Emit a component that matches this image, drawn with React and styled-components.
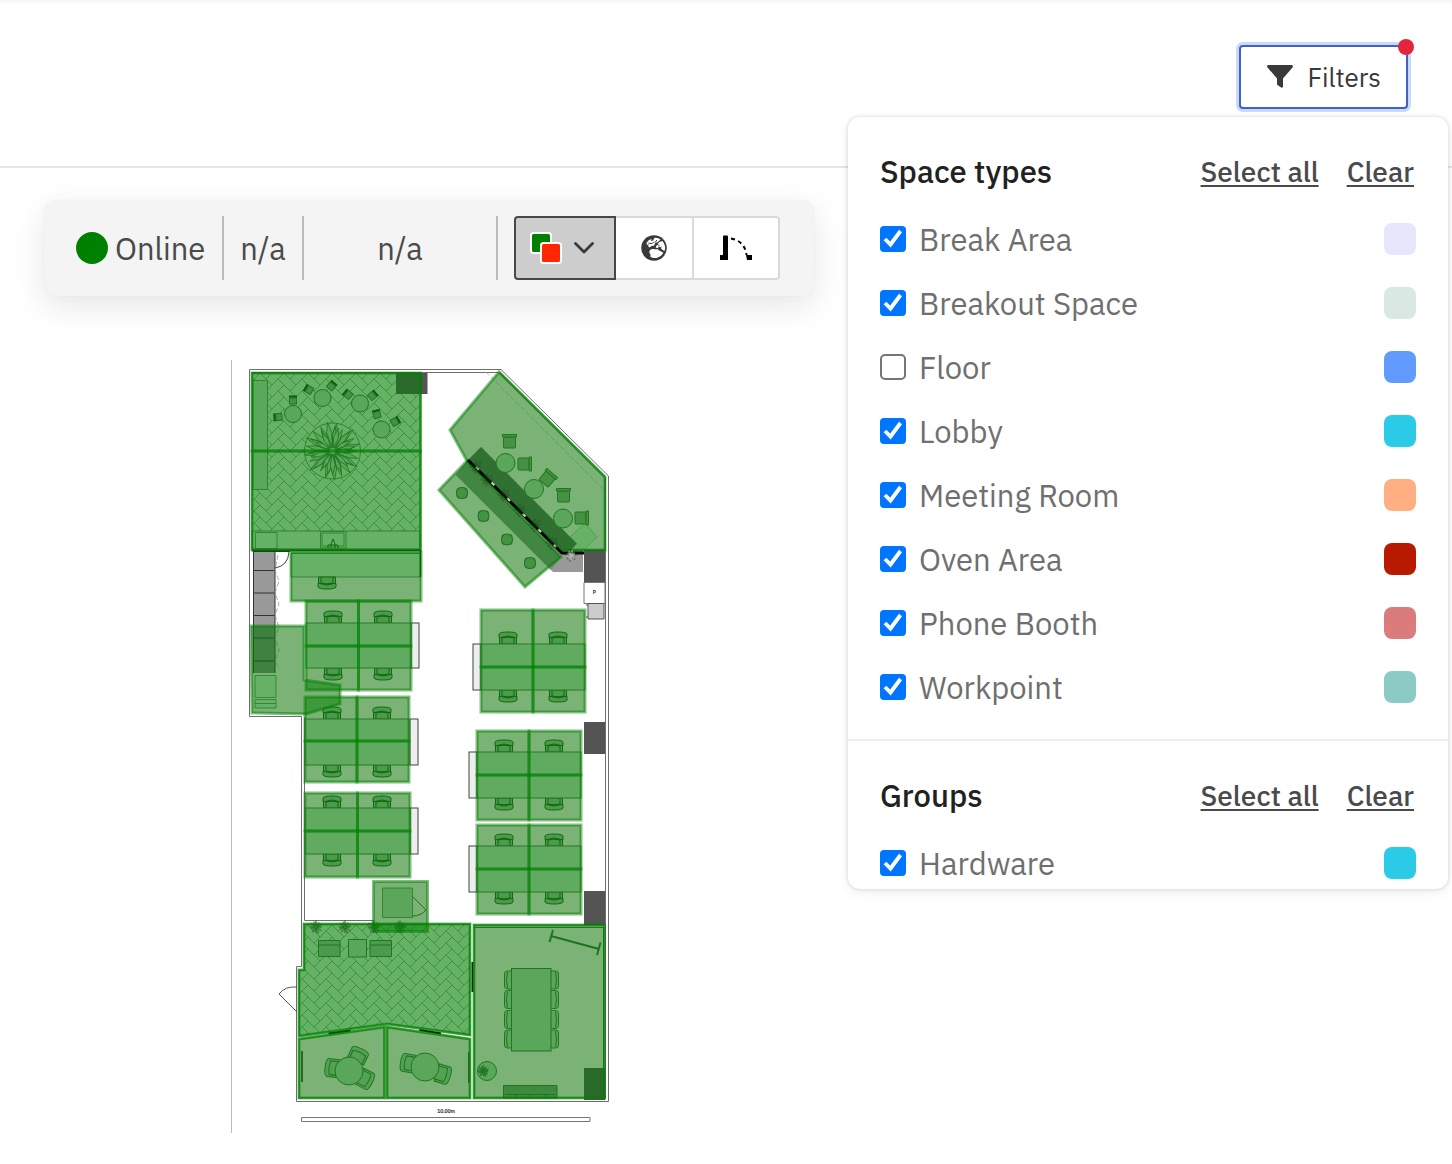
import React, { useState } from 'react';
import styled, { createGlobalStyle } from 'styled-components';

const GlobalStyle = createGlobalStyle`
  * { box-sizing: border-box; }

  body {
    margin: 0;
    background: #fff;
    color: #4a4a4a;
    font-family: "IBM Plex Sans", Roboto, "Liberation Sans", sans-serif;
  }

  button, input { font: inherit; }
`;

const spaceTypes = [
  { name: 'Break Area', color: '#e6e6fa', checked: true },
  { name: 'Breakout Space', color: '#d9e8e3', checked: true },
  { name: 'Floor', color: '#619bff', checked: false },
  { name: 'Lobby', color: '#2bcbe8', checked: true },
  { name: 'Meeting Room', color: '#ffaf82', checked: true },
  { name: 'Oven Area', color: '#b81a00', checked: true },
  { name: 'Phone Booth', color: '#db7b7b', checked: true },
  { name: 'Workpoint', color: '#8ccac6', checked: true },
];

const groups = [
  { name: 'Hardware', color: '#2bcbe8', checked: true },
];

/* ---------- icons ---------- */

const FunnelIcon = () => (
  <svg width="26" height="24" viewBox="0 0 26 24" aria-hidden="true">
    <path d="M1.5 0h23c1.3 0 1.9 1.4 1 2.4L16 13.6v8c0 1-1 1.500-1.800 1l-3.400-2.400c-.5-.3-.8-.8-.8-1.300v-5.300L.5 2.400C-.4 1.400.2 0 1.500 0z" fill="#393939" />
  </svg>
);

const LayersIcon = () => (
  <svg width="32" height="32" viewBox="0 0 32 32" aria-hidden="true">
    <rect x="1" y="1" width="20" height="20" rx="2.500" fill="green" stroke="#fff" strokeWidth="2" />
    <rect x="11" y="11" width="20" height="20" rx="2.500" fill="#ff2600" stroke="#fff" strokeWidth="2" />
  </svg>
);

const ChevronIcon = () => (
  <svg width="20" height="12" viewBox="0 0 20 12" aria-hidden="true">
    <path d="M1.500 1.500 10 10l8.500-8.500" fill="none" stroke="#393939" strokeWidth="2.800" strokeLinecap="round" strokeLinejoin="round" />
  </svg>
);

const EarthIcon = () => (
  <svg width="26" height="26" viewBox="0 0 26 26" aria-hidden="true">
    <circle cx="13" cy="13" r="12.800" fill="#393939" />
    <path d="M9 15.200c1.500-1.400 3.500-1.200 4.800-.9 1 .4 2.200-.4 3.200.2 1.700 1.400 3.600 2.600 5.400 3-1.400 2.800-3.800 4.800-6.900 5.400-2.300.3-4.800-.4-6.300-1.500.6-1 .5-1.800-.2-2.600-.8-1.100-1-2.600 0-3.600z" fill="#fff" />
    <path d="M5.600 7.700 8 5.100l2.700-1-1 2 2.500-.5 1.200-2.900 3.300.2 2.900 1.600-2.700 2.600-2.800 1-.9 2.300-3.200.8-1.200 1.300-1.900-1.200 1.200-2-2.200.7z" fill="#fff" />
    <path d="m16.100 9.500 2.200-2.600 3.100-.8c1.700 1.900 2.700 4.300 2.800 6.800l-.7 3-1.900-1-1.900-1.800 1.700-1.700-2.300.8-1.300-.6-1 1.700-2.200-.9z" fill="#fff" />
    <path d="m7.500 8 3.500.7 2-2M13 12l3-2.800 2.500 1.600M16 5l-2 2.500" fill="none" stroke="#393939" strokeWidth="1" />
  </svg>
);

const DoorSwingIcon = () => (
  <svg width="32" height="26" viewBox="0 0 32 26" aria-hidden="true">
    <path d="M3 1.500Q3 .5 4 .5h3q1 0 1 1V25H0v-5h3z" fill="#000" />
    <path d="M26 20h6v5h-5z" fill="#000" />
    <path d="M11 3.500C20 5 25.500 11 26.500 20" fill="none" stroke="#000" strokeWidth="2" strokeDasharray="4 3.500" />
  </svg>
);

/* ---------- floor plan ---------- */

const zoneShapes = [
  'M252 373H420.500V451H252z',
  'M252 451H420.500V550H252z',
  'M291 552H421V601H291z',
  'M251 626H304V680L340 685V704L306 714L252 713z',
  'M499 372L605 477V550H562L467 461L450 430z',
  'M467 461L561 557L525 587L439 490z',
  'M373.500 881.500H427.500V931.500H373.500z',
  'M304 924H470V1035L387 1024L299 1036V970H304z',
  'M299 1039L384.500 1027V1098H299z',
  'M387 1027L470 1039V1098H387z',
  'M474 925H604.500V1098H474z',
];

// x, right, top, middle, bottom of the zones, then the desk edges and the side cabinet
const clusters = [
  { x: 306, r: 411, t: 601, m: 646, b: 690, dt: 623, db: 668, side: 411 },
  { x: 305, r: 409, t: 697, m: 741, b: 782, dt: 719, db: 765, side: 410 },
  { x: 305, r: 410, t: 793, m: 831, b: 877, dt: 808, db: 854, side: 410 },
  { x: 481, r: 585, t: 610, m: 667, b: 712, dt: 644, db: 690, side: 473 },
  { x: 477, r: 581, t: 731, m: 775, b: 820, dt: 752, db: 798, side: 469 },
  { x: 477, r: 581, t: 825, m: 869, b: 914, dt: 846, db: 892, side: 469 },
];

clusters.forEach((c) => {
  const mid = (c.x + c.r) / 2;
  zoneShapes.push(
    `M${c.x} ${c.t}H${mid}V${c.m}H${c.x}z`,
    `M${mid} ${c.t}H${c.r}V${c.m}H${mid}z`,
    `M${c.x} ${c.m}H${mid}V${c.b}H${c.x}z`,
    `M${mid} ${c.m}H${c.r}V${c.b}H${mid}z`,
  );
});

const roundTables = [
  [293, 414, 8.5], [322.5, 398, 8.5], [360, 403.5, 8.5], [381.5, 429.5, 8.5],
  [505.5, 463, 9.5], [534, 489, 9.5], [563, 518.5, 9.5],
];

const cafeChairs = [
  [293, 401, 0], [279, 417, -95], [309.5, 390, -60], [331, 386.5, 40],
  [348.5, 395, -50], [372, 396, 50], [377, 415, -15], [394.5, 422, 60],
];

const loungeChairs = [
  [509.5, 441, 0], [525, 464, 90], [548, 478, 40], [563.5, 495, 0], [582, 518, 90],
];

const stools = [[462, 493], [483.5, 516], [507, 539.5], [530, 563]];

const meetingChairs = [980, 999.5, 1019.5, 1039];

const roomChairs = [
  [332, 1068, -83], [358.5, 1055, 25], [366, 1079.5, 117],
  [407.5, 1063, -80], [443.5, 1074.5, 107],
];

const plants = [
  [316, 927, 6], [345, 927, 6], [374, 927, 6], [400, 927, 6],
];

const hedge = [
  [476, 467], [487, 480], [504, 495], [520, 510], [535, 525], [552, 543], [571, 555],
];

const spikes = (cx, cy, r, n, spread = 2.4) => {
  let d = '';
  for (let i = 0; i < n; i += 1) {
    const a = (i / n) * Math.PI * 2 + (i % 3) * 0.08;
    const len = r * (0.78 + ((i * 7) % 5) * 0.05);
    const w = spread / n;
    const p = (rad, ang) => `${(cx + Math.cos(ang) * rad).toFixed(1)} ${(cy + Math.sin(ang) * rad).toFixed(1)}`;
    d += `M${p(r * 0.12, a)}L${p(len * 0.6, a - w)}L${p(len, a)}L${p(len * 0.6, a + w)}z`;
  }
  return d;
};

const TaskChair = ({ x, y, flip }) => (
  <g transform={`translate(${x} ${y}) scale(1 ${flip ? -1 : 1})`} fill="#9ab49a" stroke="#1c561c">
    <path d="M-8.500 0V-7H8.500V0z" />
    <path d="M-6 0V-6Q0-8 6-6V0" fill="none" />
    <path d="M-9-6.500V-10Q-8-12 0-12T9-10V-6.500H7Q0-9.500-7-6.500z" />
  </g>
);

const FloorPlan = () => (
  <svg width="400" height="800" viewBox="220 350 400 800" role="img" aria-label="Floor plan">
    <defs>
      <pattern id="herringbone" x="350" y="463" width="24" height="12" patternUnits="userSpaceOnUse">
        <path
          d="M0-12L18 6M0 0L18 18M0-24L18-6M12 0L30-18M12 12L30-6M12 24L30 6M12 36L30 18M-12 0L6-18M-12 12L6-6M-12 24L6 6"
          stroke="#7ea67e"
          fill="none"
        />
      </pattern>
    </defs>

    <path d="M231.500 360V1133" stroke="#bcbcbc" />

    {/* outer and inner walls */}
    <g fill="none" stroke="#6e6e6e">
      <path d="M249.500 369.500H501L608.500 476V1101.500H296.500V966.500H301.500V716.500H249.500z" />
      <path d="M252 372.500H499.500L605.500 478V1099M304.500 717V920.500H412" />
    </g>

    <g fill="#f6e4ea">
      {zoneShapes.map((d) => <path key={d} d={d} />)}
    </g>

    {/* tiled floors */}
    <path d="M252 373H420.500V550H252zM304 924H470V1035L387 1024L299 1036V970H304z" fill="#cae4cc" />
    <path d="M252 373H420.500V532H252zM304 924H470V1035L387 1024L299 1036V970H304z" fill="url(#herringbone)" />

    <g fill="#cae4cc" stroke="#4e764e" strokeWidth=".8">
      <path d="M253 380.500H267.500V489.500H253z" fill="#b4d0b4" />
      <path d="M252 531H420V549H252zM255.500 532.500H277V548.500H255.500z" />
      <path d="M320.500 531.500H346V548H320.500zM322 533H344V546H322z" />
      <path d="M291 553.500H420.500V577H291z" />
      <path d="M255 675.500H276V697.500H255zM255 699.500H276V708H255zM255 703.500H276" />
      <path d="M382.500 888H412.500V917.500H382.500z" fill="#b4ccb4" />
      <path d="M585 523L597 537L584 550L570 537z" stroke="#90bc90" />
    </g>
    <path d="M331 548V544L333 539L335 544V548M328 548v-3h10v3" fill="none" stroke="#2a4a2a" />

    {/* big tree */}
    <g stroke="#3e6e3e" strokeWidth=".8">
      <circle cx="332.500" cy="451" r="28" fill="#cae4cc" />
      <path d={spikes(332.5, 451, 30, 31, 5)} fill="#b4ccb4" />
      <path d={spikes(332.5, 451, 24, 9, 1.6)} fill="#b4ccb4" />
    </g>

    {/* lockers with their doors */}
    <path d="M253 551H275V626H253z" fill="#999" />
    <path d="M253 626H275V673H253z" fill="#808080" />
    <path d="M253.500 551V673M275 551V673M253 551.500H290M253 570.500H275M253 593H275M253 615.500H275M253 638H275M253 661H275" stroke="#333" fill="none" />
    <path d="M275 568Q288 566 289 552" stroke="#444" fill="none" />
    <path d="M278 555L275 570L279 581L275 593L279 604L275 615L279 627L275 638L279 650L275 661L279 668" stroke="#999" strokeWidth=".8" strokeDasharray="5 2" fill="none" />

    {/* planter band */}
    <path d="M481 447L583 550V572H553L456 475z" fill="#999" />
    <path d="M456 475L467 461L561 557L551 570z" fill="#828c82" />
    <path d="M481 447L583 550H562L467 461z" fill="#606060" />
    <path d="M571 550L584 536V550z" fill="#cae4cc" />
    <path d="M486 372L605 491" stroke="#a4b4a4" strokeWidth=".7" strokeDasharray="5 2" />

    {/* columns */}
    <path d="M396 373H427.500V394H396zM584 550H605V582H584zM584 722H605V754H584zM584 891H605V925H584zM584 1068H605V1100H584z" fill="#545454" />
    <path d="M584 582.500H605V603.500H584z" fill="#fff" stroke="#777" />
    <path d="M588 603.500H604V619H588zM586 605h2M586 617h2" fill="#ccc" stroke="#555" />
    <text x="594.500" y="594" fontSize="5" fontWeight="700" textAnchor="middle" fill="#333">P</text>

    {/* desks */}
    {clusters.map((c) => (
      <g key={`${c.x}-${c.t}`}>
        <rect x={c.side} y={c.dt} width="8" height={c.db - c.dt} fill="#eee" stroke="#444" />
        {[c.x + 27, c.x + 77].map((x) => (
          <g key={x}>
            <TaskChair x={x} y={c.dt} />
            <TaskChair x={x} y={c.db} flip />
          </g>
        ))}
        <rect x={c.x} y={c.dt} width={c.r - c.x} height={c.db - c.dt} fill="#c0d6c0" stroke="#4e764e" />
      </g>
    ))}
    <TaskChair x={327} y={577} flip />

    {/* round tables and loose chairs */}
    <g fill="#b4ccb4" stroke="#3e6e3e">
      {roundTables.map(([x, y, r]) => <circle key={`${x}`} cx={x} cy={y} r={r} />)}
      {cafeChairs.map(([x, y, a]) => (
        <g key={`${x}-${y}`} transform={`translate(${x} ${y}) rotate(${a})`}>
          <rect x="-3.500" y="-3" width="7" height="6" fill="#8aa48a" />
          <path d="M-4-4.500H4" stroke="#103c10" strokeWidth="2" />
        </g>
      ))}
      {loungeChairs.map(([x, y, a]) => (
        <g key={`${x}-${y}`} transform={`translate(${x} ${y}) rotate(${a})`} fill="#8aa48a">
          <rect x="-6" y="-4" width="12" height="11" rx="1" />
          <path d="M-7-6.500H7V-4H-7z" />
        </g>
      ))}
      {stools.map(([x, y]) => (
        <g key={`${x}`} fill="#8aa48a">
          <rect x={x - 5} y={y - 5} width="10" height="10" rx="2" />
          <circle cx={x} cy={y} r="5.500" />
        </g>
      ))}
    </g>

    {/* break area furniture */}
    <g fill="#98b498" stroke="#3e6e3e">
      <path d="M318.500 940.500H340V956.500H318.500zM318.500 945H340M370 940.500H391.500V956.500H370zM370 945H391.500" />
      <path d="M348.500 939.500H366.500V957H348.500z" fill="#b4ccb4" />
    </g>
    <g fill="none" stroke="#444" strokeWidth=".6">
      {plants.map(([x, y, r]) => <path key={x} d={spikes(x, y, r + 1, 12)} />)}
    </g>
    <path d="M412 896L426 910Q421 916 412 916M297 987Q285 986 279 994L297 1012" stroke="#555" fill="none" />

    {/* meeting room */}
    <g fill="#b4ccb4" stroke="#3e6e3e">
      <path d="M474 927.500H603.500V1098" fill="none" />
      {meetingChairs.map((y) => (
        <g key={y}>
          <rect x="504.500" y={y - 9} width="9" height="18" rx="3" />
          <rect x="549.500" y={y - 9} width="9" height="18" rx="3" />
          <path d={`M507.500 ${y - 8}Q505.500 ${y} 507.500 ${y + 8}M555.500 ${y - 8}Q557.500 ${y} 555.500 ${y + 8}`} />
        </g>
      ))}
      <rect x="511.500" y="968.500" width="39.500" height="82.500" />
      <circle cx="487" cy="1071" r="9.500" />
      <path d={spikes(483.5, 1071, 6, 12)} fill="none" />
      <path d="M503.500 1085.500H557V1098H503.500z" fill="#7c947c" />
      <path d="M505 1094.500H555M516 1098v-3M545 1098v-3M530 1098v-3" fill="none" />
    </g>
    <path d="M551 936L599 949M549.500 942L553 930M597 955L600.500 942.500" stroke="#3c683c" strokeWidth="2" fill="none" />

    {/* small rooms */}
    <g fill="#a8c2a8" stroke="#3e6e3e">
      {roomChairs.map(([x, y, a]) => (
        <g key={x} transform={`translate(${x} ${y}) rotate(${a})`}>
          <path d="M-7-4H7V8H-7z" />
          <path d="M-9 7V-4Q-9-7 0-7T9-4V7H7V-2Q0-4-7-2V7z" />
        </g>
      ))}
      <circle cx="349" cy="1071" r="14" fill="#b4ccb4" />
      <circle cx="425" cy="1067" r="14" fill="#b4ccb4" />
    </g>
    <path d="M302 1051V1082M469 1052V1083" stroke="#555" strokeWidth="2" />
    <path d="M328.500 1033.500L350.500 1030.500M419.500 1030L441 1033.500" stroke="#000" strokeWidth="2" />
    <path d="M472.500 962V992" stroke="#111" strokeWidth="2" />
    <path d="M252 550.500H421M420.500 551V577" stroke="#111" strokeWidth="1.500" />

    {/* sensor zones */}
    <g fill="rgba(0, 128, 0, .5)" stroke="rgba(0, 128, 0, .5)" strokeWidth="3">
      {zoneShapes.map((d) => <path key={d} d={d} />)}
    </g>
    <path
      d="M252 373H420.500V550H252zM499 372L605 477V550H562M304 924H470V1035L387 1024L299 1036V970H304zM474 925H604.500V1098H474zM299 1039L384.500 1027V1098H299zM387 1027L470 1039V1098H387z"
      fill="none"
      stroke="rgba(0, 128, 0, .6)"
      strokeWidth="2"
    />

    {/* glass wall with the hedge growing through it */}
    <path d="M468 460L562 553H584" stroke="#000" strokeWidth="3" fill="none" />
    <path d="M476 467L556 547" stroke="#cfdccf" strokeWidth="2" strokeDasharray="4 18" />
    <g fill="none" stroke="#1c4a1c" strokeWidth=".4">
      {hedge.map(([x, y]) => <path key={x} d={spikes(x, y, 7, 8)} />)}
    </g>
    <path d={spikes(571, 555, 5, 9)} fill="none" stroke="#ccc" strokeWidth=".6" />

    <text x="446" y="1113" fontSize="5" textAnchor="middle" fill="#222" stroke="#222" strokeWidth=".2">10.00m</text>
    <path d="M301.500 1117.500H590V1121.500H301.500z" fill="none" stroke="#777" />
  </svg>
);

/* ---------- page ---------- */

const FilterSection = ({ title, items }) => {
  const [checked, setChecked] = useState(items.map(item => item.checked));
  const setAll = value => setChecked(items.map(() => value));

  return (
    <Section>
      <SectionHeader>
        <SectionTitle>{title}</SectionTitle>
        <LinkButton type="button" onClick={() => setAll(true)}>Select all</LinkButton>
        <LinkButton type="button" onClick={() => setAll(false)}>Clear</LinkButton>
      </SectionHeader>
      {items.map((item, index) => (
        <Option key={item.name}>
          <Checkbox
            type="checkbox"
            checked={checked[index]}
            onChange={() => setChecked(checked.map((c, i) => (i === index ? !c : c)))}
          />
          <OptionName>{item.name}</OptionName>
          <Swatch $color={item.color} />
        </Option>
      ))}
    </Section>
  );
};

const App = () => (
  <>
    <GlobalStyle />
    <Header>
      <FilterMenu>
        <FilterButton type="button">
          <FunnelIcon />
          Filters
          <Badge />
        </FilterButton>
        <Popover>
          <FilterSection title="Space types" items={spaceTypes} />
          <FilterSection title="Groups" items={groups} />
        </Popover>
      </FilterMenu>
    </Header>
    <Main>
      <Toolbar>
        <Status><Dot />Online</Status>
        <Reading>n/a</Reading>
        <Reading $wide>n/a</Reading>
        <ButtonGroup>
          <ToolButton type="button" $active aria-label="Colours"><LayersIcon /><ChevronIcon /></ToolButton>
          <ToolButton type="button" aria-label="Globe"><EarthIcon /></ToolButton>
          <ToolButton type="button" aria-label="Doors"><DoorSwingIcon /></ToolButton>
        </ButtonGroup>
      </Toolbar>
      <Plan><FloorPlan /></Plan>
    </Main>
  </>
);

const Header = styled.header`
  display: flex;
  justify-content: flex-end;
  padding: 45px 44px 57px;
  border-bottom: 2px solid #e6e6e6;
  box-shadow: inset 0 4px 4px -2px rgba(0, 0, 0, .05);
`;

const FilterMenu = styled.div`
  position: relative;
`;

const FilterButton = styled.button`
  position: relative;
  display: flex;
  align-items: center;
  gap: 15px;
  height: 64px;
  padding: 0 25px 0 26px;
  border: 2px solid #4360c6;
  border-radius: 4px;
  background: #fff;
  box-shadow: 0 0 0 3px #c6dbff;
  color: #393939;
  font-size: 26px;
`;

const Badge = styled.span`
  position: absolute;
  top: -8px;
  right: -8px;
  width: 16px;
  height: 16px;
  border-radius: 50%;
  background: #e3263d;
`;

const Popover = styled.div`
  position: absolute;
  z-index: 1;
  top: calc(100% + 8px);
  right: -40px;
  width: 600px;
  max-height: 772px;
  overflow: hidden;
  border-radius: 12px;
  background: #fff;
  box-shadow: 0 0 4px rgba(0, 0, 0, .16), 0 4px 12px rgba(0, 0, 0, .06);
`;

const Section = styled.section`
  padding: 24px 32px 20px;

  & + & {
    border-top: 2px solid #eee;
  }
`;

const SectionHeader = styled.div`
  display: flex;
  align-items: center;
  gap: 28px;
  height: 60px;
  padding-right: 2px;
  margin-bottom: 6px;
`;

const SectionTitle = styled.h2`
  flex: 1;
  margin: 0;
  color: #212121;
  font-size: 31px;
  font-weight: 500;
`;

const LinkButton = styled.button`
  padding: 0;
  border: 0;
  background: none;
  color: #4a4a4a;
  font-size: 28px;
  font-weight: 500;
  text-decoration: underline;
  text-decoration-thickness: 2px;
  text-underline-offset: 3px;
  cursor: pointer;
`;

const Option = styled.label`
  display: flex;
  align-items: center;
  height: 64px;
  cursor: pointer;
`;

const Checkbox = styled.input`
  flex: none;
  width: 26px;
  height: 26px;
  margin: 0 13px 0 0;
  appearance: none;
  border: 2px solid #767676;
  border-radius: 5px;
  background: #fff;

  &:checked {
    border: 0;
    border-radius: 4px;
    background: #0075ff url("data:image/svg+xml,%3Csvg xmlns='http://www.w3.org/2000/svg' viewBox='0 0 26 26'%3E%3Cpath d='M5 13l5.500 5.500L20.500 5' fill='none' stroke='white' stroke-width='3.800'/%3E%3C/svg%3E");
  }
`;

const OptionName = styled.span`
  flex: 1;
  color: #6f6f6f;
  font-size: 31px;
`;

const Swatch = styled.span`
  width: 32px;
  height: 32px;
  border-radius: 8px;
  background: ${props => props.$color};
`;

const Main = styled.main`
  padding: 32px 44px;
`;

const Toolbar = styled.div`
  display: inline-flex;
  align-items: center;
  padding: 16px 34px 16px 32px;
  border-radius: 12px;
  background: #f4f4f4;
  box-shadow: 0 0 2px rgba(0, 0, 0, .06), 0 10px 32px rgba(0, 0, 0, .1);
  font-size: 31px;
`;

const Status = styled.div`
  display: flex;
  align-items: center;
  gap: 7px;
  height: 64px;
  width: 148px;
  border-right: 2px solid #bdbdbd;
`;

const Dot = styled.span`
  width: 32px;
  height: 32px;
  border-radius: 50%;
  background: green;
`;

const Reading = styled.div`
  display: flex;
  align-items: center;
  justify-content: center;
  width: ${props => (props.$wide ? '194px' : '80px')};
  height: 64px;
  border-right: 2px solid #bdbdbd;
`;

const ButtonGroup = styled.div`
  display: flex;
  margin-left: 16px;
`;

const ToolButton = styled.button`
  display: flex;
  align-items: center;
  justify-content: center;
  gap: 12px;
  height: 64px;
  padding: 0 25px;
  border: 2px solid #dadada;
  border-left-width: 0;
  background: #fff;

  &:first-child {
    border-radius: 4px 0 0 4px;
  }

  &:last-child {
    padding: 0 26px;
    border-radius: 0 4px 4px 0;
  }

  ${props => props.$active && `
    padding: 0 20px 0 14px;
    border: 2px solid #474747;
    background: #cdcdcd;
  `}
`;

const Plan = styled.div`
  margin: 54px 0 0 176px;

  svg { display: block; }
`;

export default App;
